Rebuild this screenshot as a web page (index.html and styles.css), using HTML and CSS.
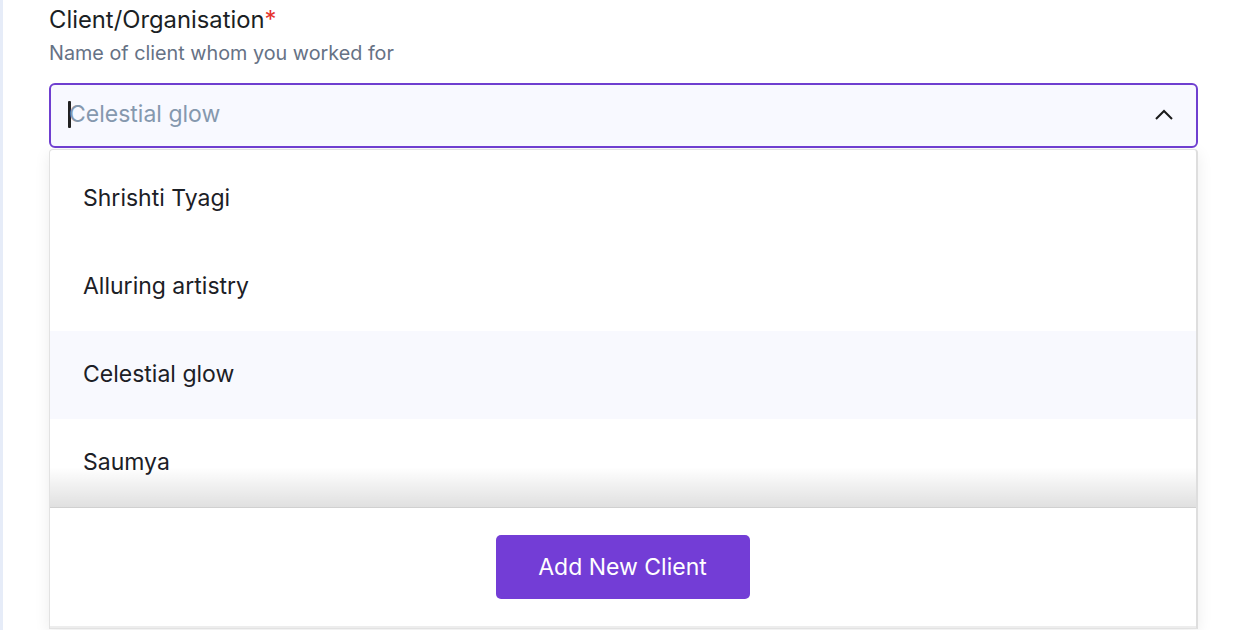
FILE: index.html
```html
<!DOCTYPE html>
<html>
<head>
<meta charset="utf-8">
<link rel="stylesheet" href="styles.css">
</head>
<body>
<div class="page">
  <div class="field">
    <div class="label">Client/Organisation<span class="req">*</span></div>
    <div class="hint">Name of client whom you worked for</div>
    <div class="select">
      <div class="input"><span class="caret"></span><span class="ph">Celestial glow</span></div>
      <svg class="chev" width="20" height="12" viewBox="0 0 20 12"><path d="M2 10 L10 2 L18 10" fill="none" stroke="#1a1a1a" stroke-width="2"/></svg>
    </div>
    <div class="menu">
      <div class="list">
        <div class="opt">Shrishti Tyagi</div>
        <div class="opt">Alluring artistry</div>
        <div class="opt active">Celestial glow</div>
        <div class="opt">Saumya</div>
        <div class="fade"></div>
      </div>
      <div class="foot">
        <button class="add">Add New Client</button>
      </div>
    </div>
  </div>
</div>
</body>
</html>
```

FILE: styles.css
```css
html, body {
  margin: 0;
  padding: 0;
  height: 100%;
  overflow: hidden;
  background: #ffffff;
}
body {
  font-family: Inter, "Noto Sans", sans-serif;
}
.page {
  border-left: 3px solid #e6ecf8;
  height: 100%;
  box-sizing: border-box;
  padding: 6px 45px 0 46px;
}
.label {
  font-size: 23.8px;
  color: #1b1f24;
  line-height: 28px;
}
.req {
  color: #e5322d;
}
.hint {
  margin-top: 7px;
  font-size: 19.8px;
  color: #667285;
  line-height: 24px;
}
.select {
  position: relative;
  margin-top: 18px;
  height: 65px;
  box-sizing: border-box;
  border: 2px solid #6f3fd0;
  border-radius: 6px;
  background: #f8f9ff;
  display: flex;
  align-items: center;
  padding-left: 17px;
  padding-bottom: 3px;
}
.input {
  display: flex;
  align-items: center;
  font-size: 23px;
  color: #8598ae;
}
.caret {
  width: 3px;
  height: 27px;
  background: #222;
  border-radius: 1px;
  margin-right: -2px;
}
.chev {
  position: absolute;
  right: 22px;
  top: 24px;
}
.menu {
  margin-top: 1px;
  background: #fff;
  border: 1px solid #e2e2e2;
  border-right: 2px solid #dedede;
  border-radius: 4px 4px 0 0;
  box-shadow: 0 4px 16px rgba(0,0,0,0.08);
}
.list {
  position: relative;
  padding-top: 5px;
}
.opt {
  height: 88px;
  box-sizing: border-box;
  padding-bottom: 2px;
  display: flex;
  align-items: center;
  padding-left: 33px;
  font-size: 23px;
  color: #1c2026;
}
.opt.active {
  background: #f8f9fe;
}
.fade {
  position: absolute;
  left: 0;
  right: 0;
  bottom: 0;
  height: 40px;
  background: linear-gradient(to bottom, rgba(0,0,0,0), rgba(0,0,0,0.12));
}
.foot {
  border-top: 1px solid #d0d0d0;
  border-bottom: 2px solid #ededed;
  height: 118px;
  display: flex;
  justify-content: center;
  align-items: center;
}
.add {
  width: 254px;
  height: 64px;
  border: none;
  border-radius: 5px;
  background: #733dd6;
  color: #fff;
  font-family: Inter, "Noto Sans", sans-serif;
  font-size: 23px;
  margin-left: -1px;
}
```
